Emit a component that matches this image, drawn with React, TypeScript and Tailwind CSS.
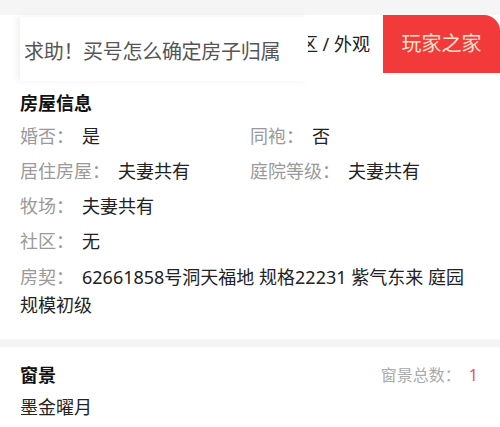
const font = "font-['Noto_Sans','Noto_Sans_CJK_SC',sans-serif]"

function Row({ label, value }: { label: string; value: string }) {
    return (
        <div className="flex items-center h-[35px]">
            <span className="text-[#9a9a9a]">{label}</span>
            <span className="ml-[8px] text-[#222]">{value}</span>
        </div>
    )
}

export default function App() {
    return (
        <div className={`${font} w-[500px] h-[427px] bg-white overflow-hidden text-[18px]`}>
            {/* 顶部栏 */}
            <div className="bg-[#f5f5f5] pt-[15px]">
                <div className="relative flex items-center h-[58px] bg-white">
                    <div className="flex-1 flex justify-end pr-[13px] text-[18px] text-[#222]">社区 / 外观</div>
                    <div className="w-[117px] h-full flex items-center justify-center bg-[#f23a3a] rounded-tr-[16px] text-[20px] text-[#ffe6d2]">
                        玩家之家
                    </div>
                    {/* 提示浮层 */}
                    <div className="absolute left-[20px] top-[2px] w-[288px] h-[64px] bg-white flex items-center pl-[4px] pt-[5px] shadow-[-3px_0_6px_rgba(0,0,0,0.06)] text-[20px] text-[#555] tracking-[-0.3px]">
                        求助！买号怎么确定房子归属
                    </div>
                </div>
            </div>

            {/* 房屋信息 */}
            <div className="px-[20px] pt-[14px] pb-[20px]">
                <div className="font-bold text-[#111] h-[32px] flex items-center">房屋信息</div>
                <div className="grid grid-cols-2">
                    <Row label="婚否：" value="是" />
                    <Row label="同袍：" value="否" />
                    <Row label="居住房屋：" value="夫妻共有" />
                    <Row label="庭院等级：" value="夫妻共有" />
                </div>
                <Row label="牧场：" value="夫妻共有" />
                <Row label="社区：" value="无" />
                <div className="mt-[4px] leading-[28px] pr-[10px]">
                    <span className="text-[#9a9a9a]">房契：</span>
                    <span className="ml-[8px] text-[#222]">62661858号洞天福地 规格22231 紫气东来 庭园规模初级</span>
                </div>
            </div>

            <div className="h-[8px] bg-[#f5f5f5]" />

            {/* 窗景 */}
            <div className="px-[20px] pt-[13px]">
                <div className="flex items-center justify-between h-[30px]">
                    <span className="font-bold text-[#111]">窗景</span>
                    <span className="text-[16px] text-[#aaa] pr-[2px]">
                        窗景总数：<span className="ml-[8px] text-[#e0506a]">1</span>
                    </span>
                </div>
                <div className="h-[34px] flex items-center text-[#222]">墨金曜月</div>
            </div>
        </div>
    )
}
